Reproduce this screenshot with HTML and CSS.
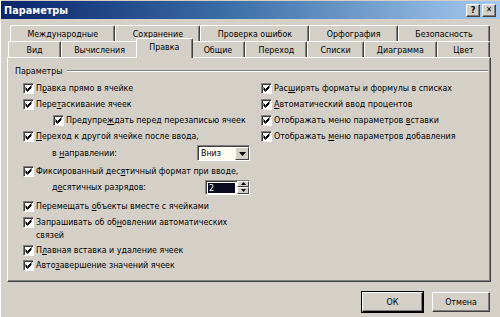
FILE: index.html
```html
<!DOCTYPE html>
<html lang="ru">
<head>
    <meta charset="UTF-8">
    <title>Параметры</title>
    <link rel="stylesheet" href="styles.css">
</head>
<body>
    <div class="dialog">
        <div class="titlebar">
            <span class="title">Параметры</span>
            <div class="caption-btns">
                <span class="cbtn">?</span>
                <span class="cbtn close">&#x2715;</span>
            </div>
        </div>

        <div class="tabs">
            <div class="tabrow back">
                <div class="tab">Международные</div>
                <div class="tab">Сохранение</div>
                <div class="tab">Проверка ошибок</div>
                <div class="tab">Орфография</div>
                <div class="tab">Безопасность</div>
            </div>
            <div class="tabrow front">
                <div class="tab">Вид</div>
                <div class="tab">Вычисления</div>
                <div class="tab active">Правка</div>
                <div class="tab">Общие</div>
                <div class="tab">Переход</div>
                <div class="tab">Списки</div>
                <div class="tab">Диаграмма</div>
                <div class="tab">Цвет</div>
            </div>
        </div>

        <div class="panel">
            <div class="group-title"><span>Параметры</span></div>
            <div class="cols">
                <div class="col">
                    <div class="opt"><span class="box"></span><span>П<u>р</u>авка прямо в ячейке</span></div>
                    <div class="opt"><span class="box"></span><span>Пере<u>т</u>аскивание ячеек</span></div>
                    <div class="opt sub"><span class="box"></span><span>Предупре<u>ж</u>дать перед перезаписью ячеек</span></div>
                    <div class="opt"><span class="box"></span><span><u>П</u>ереход к другой ячейке после ввода,</span></div>
                    <div class="field-row combo-row">
                        <span>в <u>н</u>аправлении:</span>
                        <div class="combo"><span class="combo-text">Вниз</span><span class="drop"></span></div>
                    </div>
                    <div class="opt gap1"><span class="box"></span><span>Фиксированный дес<u>я</u>тичный формат при вводе,</span></div>
                    <div class="field-row spin-row">
                        <span>д<u>е</u>сятичных разрядов:</span>
                        <div class="spin"><span class="spin-field"><span class="sel">2</span></span><span class="spin-btns"><span class="up"></span><span class="down"></span></span></div>
                    </div>
                    <div class="opt gap3"><span class="box"></span><span>Перемещать <u>о</u>бъекты вместе с ячейками</span></div>
                    <div class="opt two-line"><span class="box"></span><span>Запрашивать об об<u>н</u>овлении автоматических<br>связей</span></div>
                    <div class="opt"><span class="box"></span><span>П<u>л</u>авная вставка и удаление ячеек</span></div>
                    <div class="opt last"><span class="box"></span><span>Авто<u>з</u>авершение значений ячеек</span></div>
                </div>
                <div class="col">
                    <div class="opt"><span class="box"></span><span>Рас<u>ш</u>ирять форматы и формулы в списках</span></div>
                    <div class="opt"><span class="box"></span><span><u>А</u>втоматический ввод процентов</span></div>
                    <div class="opt"><span class="box"></span><span>Отображать меню параметров <u>в</u>ставки</span></div>
                    <div class="opt"><span class="box"></span><span>Отображать <u>м</u>еню параметров добавления</span></div>
                </div>
            </div>
        </div>

        <div class="actions">
            <button class="btn default">ОК</button>
            <button class="btn cancel">Отмена</button>
        </div>
    </div>
</body>
</html>
```

FILE: styles.css
```css
body {
    margin: 0;
    background-color: #d4d0c8;
    font-family: "DejaVu Sans Condensed", "DejaVu Sans", sans-serif;
    font-size: 8.8px;
    color: #000;
}

.dialog {
    width: 500px;
    height: 317px;
    box-sizing: border-box;
    background-color: #d4d0c8;
    border-left: 1px solid #ffffff;
    overflow: hidden;
}

/* title bar */
.titlebar {
    height: 18px;
    margin-top: 1px;
    display: flex;
    align-items: center;
    justify-content: space-between;
    padding: 0 4px 0 3px;
    background: linear-gradient(to right, #0a246a 0%, #3a6ea5 45%, #a6caf0 100%);
}

.title {
    color: #fff;
    font-weight: bold;
    font-size: 10.8px;
}

.caption-btns {
    display: flex;
    gap: 2px;
}

.cbtn {
    width: 12px;
    height: 11px;
    display: flex;
    align-items: center;
    justify-content: center;
    background-color: #d4d0c8;
    border: 1px solid;
    border-color: #fff #404040 #404040 #fff;
    box-shadow: inset -1px -1px #808080;
    font-size: 9px;
    font-weight: bold;
    line-height: 1;
}

.cbtn.close {
    font-size: 8px;
}

/* tabs */
.tabs {
    margin-top: 6px;
}

.tabrow {
    display: flex;
    height: 16px;
}

.tabrow.back {
    margin-left: 9px;
    width: 480px;
}

.tabrow.front {
    margin-left: 7px;
    width: 482px;
    align-items: flex-end;
}

.tab {
    flex: 1 1 auto;
    min-width: 53px;
    height: 16px;
    box-sizing: border-box;
    display: flex;
    align-items: center;
    justify-content: center;
    padding: 0 12px;
    white-space: nowrap;
    border: 1px solid;
    border-bottom: none;
    border-color: #fff #404040 #404040 #fff;
    border-radius: 2px 2px 0 0;
    box-shadow: inset -1px 0 #808080;
    background-color: #d4d0c8;
}

.tab.active {
    position: relative;
    z-index: 1;
    height: 20px;
    margin: -3px -2px -1px -2px;
    padding-bottom: 3px;
}

/* main panel */
.panel {
    margin-left: 6px;
    width: 484px;
    height: 225px;
    box-sizing: border-box;
    border: 1px solid;
    border-color: #fff #404040 #404040 #fff;
    box-shadow: inset -1px -1px #808080;
}

.group-title {
    display: flex;
    align-items: center;
    margin: 6px 2px 0 7px;
    height: 13px;
}

.group-title::after {
    content: "";
    flex: 1;
    margin-left: 5px;
    border-top: 1px solid #808080;
    border-bottom: 1px solid #fff;
}

.cols {
    display: grid;
    grid-template-columns: 253px 1fr;
    margin-top: 3px;
}

.col:first-child {
    padding-left: 15px;
}

.opt {
    display: flex;
    align-items: center;
    gap: 2px;
    height: 16px;
    white-space: nowrap;
}

.opt.sub {
    padding-left: 30px;
}

.opt.gap1 {
    margin-top: 1px;
}

.opt.gap3 {
    margin-top: 3px;
}

.opt.two-line {
    height: auto;
    align-items: flex-start;
    line-height: 13px;
    margin-top: 2px;
}

.opt.last {
    margin-top: -1px;
}

.box {
    flex: none;
    width: 11px;
    height: 11px;
    box-sizing: border-box;
    background: #fff url("data:image/svg+xml,%3Csvg xmlns='http://www.w3.org/2000/svg' width='9' height='9'%3E%3Cpath d='M1.5 3.5 L3.5 5.5 L7.5 1.5 M1.5 4.5 L3.5 6.5 L7.5 2.5 M1.5 5.5 L3.5 7.5 L7.5 3.5' stroke='%23000' fill='none' stroke-width='1'/%3E%3C/svg%3E") no-repeat center;
    border: 1px solid;
    border-color: #808080 #fff #fff #808080;
    box-shadow: inset 1px 1px #404040;
}

.two-line .box {
    margin-top: 1px;
}

/* inline fields */
.field-row {
    display: flex;
    align-items: center;
    justify-content: space-between;
    padding-left: 29px;
    padding-right: 11px;
}

.combo-row {
    height: 18px;
}

.spin-row {
    height: 16px;
}

.combo {
    width: 53px;
    height: 16px;
    box-sizing: border-box;
    display: flex;
    background-color: #fffdf2;
    border: 1px solid;
    border-color: #808080 #fff #fff #808080;
    box-shadow: inset 1px 1px #404040;
}

.combo-text {
    flex: 1;
    padding: 2px 0 0 3px;
}

.drop {
    width: 14px;
    box-sizing: border-box;
    margin: 1px 0 0 0;
    background: #d4d0c8 url("data:image/svg+xml,%3Csvg xmlns='http://www.w3.org/2000/svg' width='7' height='4'%3E%3Cpath d='M0 0h7L3.5 4z' fill='%23000'/%3E%3C/svg%3E") no-repeat center;
    border: 1px solid;
    border-color: #fff #404040 #404040 #fff;
}

.spin {
    width: 45px;
    height: 15px;
    box-sizing: border-box;
    display: flex;
    background-color: #fff;
    border: 1px solid;
    border-color: #808080 #fff #fff #808080;
    box-shadow: inset 1px 1px #404040;
}

.spin-field {
    flex: 1;
    padding: 2px 2px 1px 2px;
    display: flex;
}

.sel {
    flex: 1;
    background-color: #0a0a20;
    color: #fff;
    line-height: 10px;
    padding-left: 1px;
}

.spin-btns {
    width: 12px;
    display: flex;
    flex-direction: column;
}

.spin-btns span {
    flex: 1;
    box-sizing: border-box;
    border: 1px solid;
    border-color: #fff #404040 #404040 #fff;
    background: #d4d0c8 no-repeat center;
}

.spin-btns .up {
    background-image: url("data:image/svg+xml,%3Csvg xmlns='http://www.w3.org/2000/svg' width='5' height='3'%3E%3Cpath d='M2.5 0L5 3H0z' fill='%23000'/%3E%3C/svg%3E");
}

.spin-btns .down {
    background-image: url("data:image/svg+xml,%3Csvg xmlns='http://www.w3.org/2000/svg' width='5' height='3'%3E%3Cpath d='M0 0h5L2.5 3z' fill='%23000'/%3E%3C/svg%3E");
}

/* bottom buttons */
.actions {
    display: flex;
    justify-content: flex-end;
    gap: 9px;
    margin-top: 10px;
    padding-right: 10px;
}

.btn {
    height: 20px;
    box-sizing: border-box;
    font-family: "DejaVu Sans Condensed", "DejaVu Sans", sans-serif;
    font-size: 8.8px;
    background-color: #d4d0c8;
    border: 1px solid;
    border-color: #fff #404040 #404040 #fff;
    box-shadow: inset -1px -1px #808080;
    padding: 0;
}

.btn.default {
    width: 61px;
    outline: 1px solid #000;
    outline-offset: 0;
    border-color: #fff #000 #000 #fff;
}

.btn.cancel {
    width: 58px;
}
```
